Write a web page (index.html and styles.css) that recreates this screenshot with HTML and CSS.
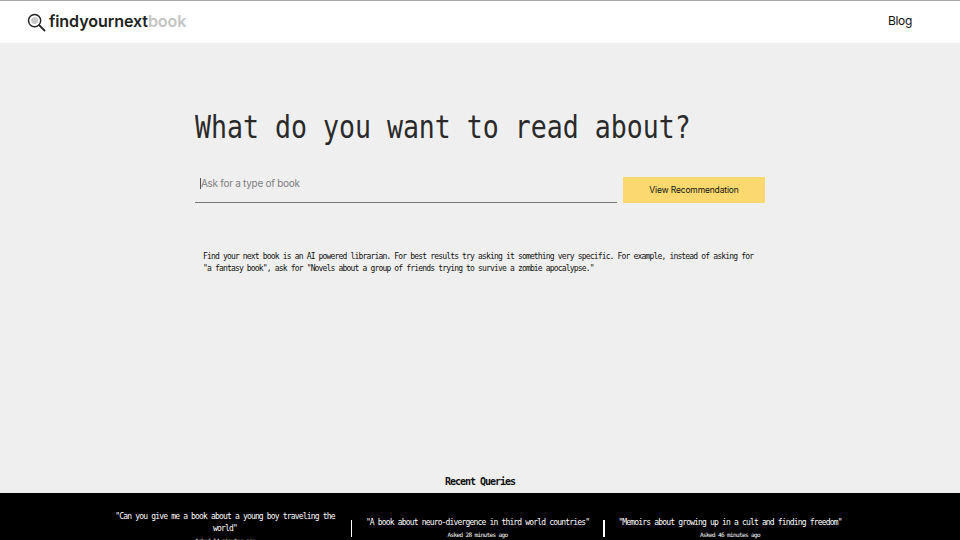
FILE: index.html
```html
<!DOCTYPE html>
<html lang="en">
<head>
<meta charset="utf-8">
<title>Find your next book</title>
<link rel="stylesheet" href="styles.css">
</head>
<body>
<header class="topbar">
  <a class="brand" href="#">
    <svg class="brand-icon" viewBox="0 0 20 20" width="19" height="19" aria-hidden="true">
      <circle cx="8" cy="8" r="6.4" fill="none" stroke="#222" stroke-width="1.5"/>
      <circle cx="8" cy="8" r="3.6" fill="#c8c8c8"/>
      <line x1="12.8" y1="12.8" x2="18.5" y2="18.5" stroke="#222" stroke-width="2" stroke-linecap="round"/>
    </svg>
    <span class="brand-name">findyournext<span class="brand-muted">book</span></span>
  </a>
  <a class="blog" href="#">Blog</a>
</header>
<main class="main">
  <h1 class="title"><span class="squeeze">What do you want to read about?</span></h1>
  <form class="search">
    <div class="field"><span class="caret"></span><span class="placeholder">Ask for a type of book</span></div>
    <button class="cta" type="button">View Recommendation</button>
  </form>
  <p class="intro">Find your next book is an AI powered librarian. For best results try asking it something very specific. For example, instead of asking for<br>"a fantasy book", ask for "Novels about a group of friends trying to survive a zombie apocalypse."</p>
</main>
<section class="recent">
  <h2 class="recent-title">Recent Queries</h2>
  <div class="strip">
    <div class="query">
      <p class="q-text">"Can you give me a book about a young boy traveling the world"</p>
      <p class="q-time">Asked 14 minutes ago</p>
    </div>
    <span class="rule"></span>
    <div class="query">
      <p class="q-text">"A book about neuro-divergence in third world countries"</p>
      <p class="q-time">Asked 28 minutes ago</p>
    </div>
    <span class="rule"></span>
    <div class="query">
      <p class="q-text">"Memoirs about growing up in a cult and finding freedom"</p>
      <p class="q-time">Asked 46 minutes ago</p>
    </div>
  </div>
</section>
</body>
</html>
```
FILE: styles.css
```css
* { box-sizing: border-box; }
html, body { margin: 0; height: 540px; overflow: hidden; }
body { display: flex; flex-direction: column; background: #efefef; font-family: "Liberation Sans", Arial, sans-serif; color: #111; }
.topbar { height: 43px; flex: none; background: #fff; border-top: 1px solid #aaa; display: flex; align-items: center; justify-content: space-between; padding: 0 48px 2px 27px; }
.brand { display: flex; align-items: center; gap: 3px; text-decoration: none; color: #222; }
.brand-icon { margin-top: 3px; }
.brand-name { font-family: Inter, "Liberation Sans", sans-serif; font-weight: 600; font-size: 16.1px; letter-spacing: -0.1px; }
.brand-muted { color: #c4c4c4; }
.blog { margin-bottom: 2px; font-family: Inter, sans-serif; font-size: 12px; letter-spacing: -0.3px; color: #111; text-decoration: none; }
.main { flex: 1; width: 570px; margin: 0 auto; }
.title { margin: 63px 0 0; height: 42px; font-family: "DejaVu Sans Mono", monospace; font-weight: 400; font-size: 32px; line-height: 42px; color: #2a2a2a; white-space: nowrap; }
.squeeze { display: inline-block; transform: scaleX(0.83); transform-origin: left center; }
.search { display: flex; gap: 6px; margin-top: 29px; height: 26px; }
.field { flex: 1; display: flex; align-items: flex-start; padding: 0 0 0 5px; border-bottom: 1px solid #777; }
.caret { width: 1px; height: 11px; background: #555; margin-top: 1px; }
.placeholder { font-family: Inter, sans-serif; font-size: 10px; letter-spacing: -0.28px; line-height: 13px; color: #808080; }
.cta { width: 142px; height: 26px; border: 0; padding: 0; background: #fbd96f; font-family: Inter, sans-serif; font-size: 8.5px; letter-spacing: -0.15px; color: #111; }
.intro { margin: 48px 0 0; padding: 0 8px; font-family: "DejaVu Sans Mono", monospace; font-size: 8px; letter-spacing: -0.83px; line-height: 12px; color: #111; white-space: nowrap; }
.recent { flex: none; height: 65px; }
.recent-title { margin: 0 0 5px; height: 13px; text-align: center; font-family: "DejaVu Sans Mono", monospace; font-weight: 700; font-size: 10px; letter-spacing: -1.02px; line-height: 13px; color: #111; }
.strip { height: 70px; background: #000; display: flex; justify-content: center; align-items: center; padding: 2px 5px 0 0; color: #fff; }
.query { width: 251px; padding: 0 12px; text-align: center; }
.rule { width: 1.5px; height: 17px; background: #fff; flex: none; margin-bottom: 2px; }
.q-text { margin: 0; font-family: "DejaVu Sans Mono", monospace; font-size: 8px; letter-spacing: -0.83px; line-height: 12px; }
.q-time { margin: 0; font-family: "DejaVu Sans Mono", monospace; font-size: 6px; letter-spacing: -0.61px; line-height: 12px; }
```
